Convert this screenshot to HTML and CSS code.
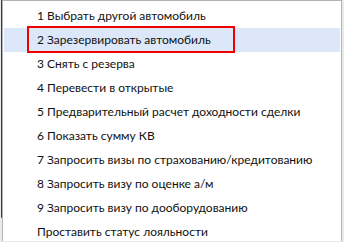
FILE: index.html
```html
<!DOCTYPE html>
<html lang="ru">
<head>
    <meta charset="UTF-8">
    <title>Меню действий</title>
    <link rel="stylesheet" href="styles.css">
</head>
<body>
    <div class="backdrop">
        <div class="window-edge"></div>
    </div>
    <ul class="context-menu">
        <li class="menu-item">1 Выбрать другой автомобиль</li>
        <li class="menu-item active"><span class="marked">2 Зарезервировать автомобиль</span></li>
        <li class="menu-item">3 Снять с резерва</li>
        <li class="menu-item">4 Перевести в открытые</li>
        <li class="menu-item">5 Предварительный расчет доходности сделки</li>
        <li class="menu-item">6 Показать сумму КВ</li>
        <li class="menu-item">7 Запросить визы по страхованию/кредитованию</li>
        <li class="menu-item">8 Запросить визу по оценке а/м</li>
        <li class="menu-item">9 Запросить визу по дооборудованию</li>
        <li class="menu-item">Проставить статус лояльности</li>
    </ul>
</body>
</html>
```

FILE: styles.css
```css
body {
    margin: 0;
    width: 344px;
    height: 242px;
    overflow: hidden;
    position: relative;
    background-color: #f0f0f0;
    font-family: "Segoe UI", Lato, "Noto Sans", sans-serif;
    font-size: 12px;
}
.backdrop {
    height: 242px;
    background-color: #e9e9e9;
}
.window-edge {
    height: 217px;
    width: 340px;
    border-left: 1px solid #3c3c3c;
    border-bottom: 1px solid #8c8c8c;
    margin-left: 1px;
    background-color: #f3f3f3;
}
/* popup menu lies over the window behind it */
.context-menu {
    position: absolute;
    top: 0;
    left: 2px;
    width: 336px;
    height: 237px;
    overflow: hidden;
    margin: 0;
    padding: 3px 1px 0;
    list-style: none;
    background-color: #fff;
    border: 1px solid #b4b4b4;
    border-bottom: none;
}
.menu-item {
    height: 24px;
    line-height: 24px;
    padding-left: 33px;
    color: #111;
    white-space: nowrap;
}
.menu-item.active {
    background-color: #dce7f9;
}
.marked {
    display: inline-block;
    box-sizing: border-box;
    width: 208px;
    height: 27px;
    line-height: 23px;
    margin: -2px 0 -1px -10px;
    padding-left: 8px;
    border: 2px solid #f00000;
    vertical-align: top;
}
```
